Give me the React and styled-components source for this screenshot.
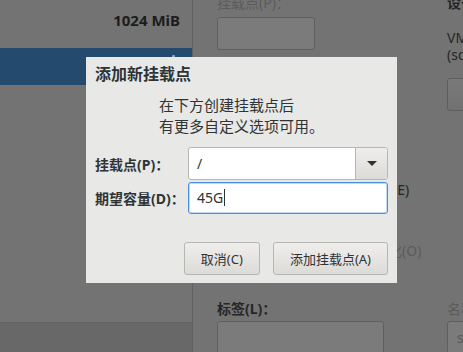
import React from "react";
import styled, { createGlobalStyle } from "styled-components";

const GlobalStyle = createGlobalStyle`
  html, body {
    margin: 0;
    padding: 0;
    background: #737373;
  }
  * {
    box-sizing: border-box;
  }
  body {
    font-family: "Noto Sans", "Noto Sans CJK SC", sans-serif;
  }
`;

const App = () => {
  return (
    <>
      <GlobalStyle />
      <ScreenStyled>
        <SidebarStyled>
          <SizeRowStyled>1024 MiB</SizeRowStyled>
          <SelectedRowStyled>
            <RowMarkStyled />
          </SelectedRowStyled>
          <SidebarFillerStyled />
          <SidebarFooterStyled />
        </SidebarStyled>

        <DetailsStyled>
          <ColumnStyled>
            <FieldLabelStyled $muted>挂载点(P)：</FieldLabelStyled>
            <FieldBoxStyled $width="98px" $top="4px" />
            <CheckLabelStyled $top="130px" $left="148px">
              加密(E)
            </CheckLabelStyled>
            <CheckLabelStyled $top="41px" $left="115px" $muted>
              重新格式化(O)
            </CheckLabelStyled>
            <FieldLabelStyled $top="38px" $bold>
              标签(L)：
            </FieldLabelStyled>
            <FieldBoxStyled $width="167px" $top="2px" />
          </ColumnStyled>

          <ColumnStyled>
            <FieldLabelStyled $bold>设备</FieldLabelStyled>
            <DeviceTextStyled>
              VMware Virtual S
              <br />
              (sda)
            </DeviceTextStyled>
            <ModifyButtonStyled />
            <FieldLabelStyled $top="188px" $muted>
              名称(N)：
            </FieldLabelStyled>
            <FieldBoxStyled $width="120px" $top="2px">
              <FieldValueStyled>sda2</FieldValueStyled>
            </FieldBoxStyled>
          </ColumnStyled>
        </DetailsStyled>

        <DialogStyled>
          <DialogTitleStyled>添加新挂载点</DialogTitleStyled>
          <DialogTextStyled>
            在下方创建挂载点后
            <br />
            有更多自定义选项可用。
          </DialogTextStyled>

          <FormGridStyled>
            <FormLabelStyled>挂载点(P)：</FormLabelStyled>
            <ComboStyled>
              <ComboEntryStyled>/</ComboEntryStyled>
              <ComboButtonStyled>
                <ArrowStyled />
              </ComboButtonStyled>
            </ComboStyled>

            <FormLabelStyled>期望容量(D)：</FormLabelStyled>
            <EntryStyled>
              45G
              <CaretStyled />
            </EntryStyled>
          </FormGridStyled>

          <DialogFooterStyled>
            <DialogButtonStyled>取消(C)</DialogButtonStyled>
            <DialogButtonStyled>添加挂载点(A)</DialogButtonStyled>
          </DialogFooterStyled>
        </DialogStyled>
      </ScreenStyled>
    </>
  );
};

export default App;

// underlying (dimmed) window
const ScreenStyled = styled.div`
  position: relative;
  display: flex;
  width: 463px;
  height: 352px;
  overflow: hidden;
  background: #737373;
`;
const SidebarStyled = styled.div`
  display: flex;
  flex-direction: column;
  width: 193px;
  flex-shrink: 0;
  border-right: 1px solid #626262;
`;
const SizeRowStyled = styled.div`
  height: 48px;
  padding: 10px 12px 0 0;
  text-align: right;
  font-size: 15px;
  font-weight: 700;
  line-height: 20px;
  color: #1c1c1c;
`;
const SelectedRowStyled = styled.div`
  display: flex;
  justify-content: flex-end;
  height: 37px;
  padding: 7px 17px 0 0;
  background: #244a6e;
`;
const RowMarkStyled = styled.span`
  width: 3px;
  height: 3px;
  border-radius: 1px;
  background: #8da2b6;
`;
const SidebarFillerStyled = styled.div`
  flex: 1;
`;
const SidebarFooterStyled = styled.div`
  height: 30px;
  border-top: 1px solid #616161;
  background: #686868;
`;
const DetailsStyled = styled.div`
  display: grid;
  grid-template-columns: 230px 200px;
  padding-left: 24px;
`;
const ColumnStyled = styled.div`
  display: flex;
  flex-direction: column;
  align-items: flex-start;
`;
const FieldLabelStyled = styled.div`
  margin-top: ${(p) => p.$top || "-7px"};
  font-size: 14px;
  line-height: 20px;
  font-weight: ${(p) => (p.$bold ? 700 : 400)};
  color: ${(p) => (p.$muted ? "#5b5b5b" : "#262626")};
  white-space: nowrap;
`;
const FieldBoxStyled = styled.div`
  display: flex;
  align-items: center;
  width: ${(p) => p.$width};
  height: 33px;
  margin-top: ${(p) => p.$top};
  padding-left: 9px;
  border: 1px solid #5f5f5f;
  border-radius: 3px;
  background: #7b7b7b;
`;
const FieldValueStyled = styled.span`
  font-size: 14px;
  color: #585858;
`;
const CheckLabelStyled = styled.div`
  margin-top: ${(p) => p.$top};
  margin-left: ${(p) => p.$left};
  font-size: 14px;
  line-height: 20px;
  color: ${(p) => (p.$muted ? "#5b5b5b" : "#262626")};
  white-space: nowrap;
`;
const DeviceTextStyled = styled.div`
  margin-top: 16px;
  font-size: 14px;
  line-height: 17px;
  color: #262626;
  white-space: nowrap;
`;
const ModifyButtonStyled = styled.div`
  width: 80px;
  height: 33px;
  margin-top: 15px;
  border: 1px solid #5e5e5e;
  border-radius: 3px;
  background: linear-gradient(#7a7a7a, #717171);
`;

// dialog
const DialogStyled = styled.div`
  position: absolute;
  left: 86px;
  top: 57px;
  display: flex;
  flex-direction: column;
  width: 311px;
  height: 226px;
  padding: 6px 9px 8px 9px;
  background: #e8e8e7;
  color: #2e3436;
`;
const DialogTitleStyled = styled.h1`
  margin: 0;
  font-size: 16px;
  font-weight: 700;
  line-height: 22px;
`;
const DialogTextStyled = styled.p`
  margin: 10px 0 0 64px;
  font-size: 15px;
  line-height: 21px;
`;
const FormGridStyled = styled.div`
  display: grid;
  grid-template-columns: 93px 200px;
  grid-auto-rows: 33px;
  row-gap: 1px;
  align-items: center;
  margin-top: 10px;
`;
const FormLabelStyled = styled.label`
  font-size: 14px;
  font-weight: 700;
  white-space: nowrap;
`;
const ComboStyled = styled.div`
  display: flex;
  height: 33px;
  border: 1px solid #b6b6b3;
  border-radius: 3px;
  background: #ffffff;
  overflow: hidden;
`;
const ComboEntryStyled = styled.div`
  flex: 1;
  display: flex;
  align-items: center;
  padding-left: 8px;
  font-size: 14px;
`;
const ComboButtonStyled = styled.div`
  display: flex;
  align-items: center;
  justify-content: center;
  width: 32px;
  border-left: 1px solid #b6b6b3;
  background: linear-gradient(#efeeec, #dcdbd8);
`;
const ArrowStyled = styled.span`
  width: 0;
  height: 0;
  border-left: 5px solid transparent;
  border-right: 5px solid transparent;
  border-top: 5px solid #2e3436;
`;
const EntryStyled = styled.div`
  display: flex;
  align-items: center;
  height: 32px;
  padding-left: 8px;
  border: 1px solid #4a90d9;
  border-radius: 3px;
  box-shadow: inset 0 0 0 1px rgba(74, 144, 217, 0.35);
  background: #ffffff;
  font-size: 14px;
  color: #2e3436;
`;
const CaretStyled = styled.span`
  width: 1px;
  height: 17px;
  margin-left: 1px;
  background: #2e3436;
`;
const DialogFooterStyled = styled.div`
  display: flex;
  justify-content: flex-end;
  gap: 13px;
  margin-top: auto;
`;
const DialogButtonStyled = styled.button`
  height: 33px;
  padding: 0 16px;
  border: 1px solid #b6b6b3;
  border-radius: 3px;
  background: linear-gradient(#efeeec, #dcdbd8);
  font-family: "Noto Sans", "Noto Sans CJK SC", sans-serif;
  font-size: 13px;
  color: #2e3436;
  cursor: pointer;
`;
